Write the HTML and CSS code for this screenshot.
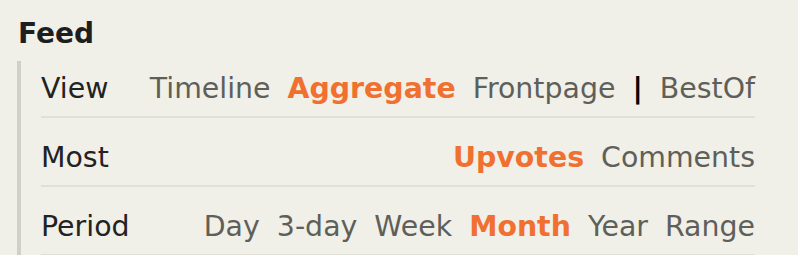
FILE: index.html
```html
<!DOCTYPE html>
<html>
<head>
<meta charset="utf-8">
<link rel="stylesheet" href="styles.css">
</head>
<body>
<section class="feed">
  <h2 class="feed-title">Feed</h2>
  <div class="feed-options">
    <div class="opt-row first">
      <span class="opt-label">View</span>
      <div class="opt-choices">
        <a class="choice">Timeline</a>
        <a class="choice active">Aggregate</a>
        <a class="choice">Frontpage</a>
        <span class="sep">|</span>
        <a class="choice">BestOf</a>
      </div>
    </div>
    <div class="opt-row">
      <span class="opt-label">Most</span>
      <div class="opt-choices">
        <a class="choice active">Upvotes</a>
        <a class="choice">Comments</a>
      </div>
    </div>
    <div class="opt-row">
      <span class="opt-label">Period</span>
      <div class="opt-choices">
        <a class="choice">Day</a>
        <a class="choice">3-day</a>
        <a class="choice">Week</a>
        <a class="choice active">Month</a>
        <a class="choice">Year</a>
        <a class="choice">Range</a>
      </div>
    </div>
  </div>
</section>
</body>
</html>
```
FILE: styles.css
```css
html, body {
  margin: 0;
  padding: 0;
  background: #f0efe8;
}
body {
  font-family: "DejaVu Sans", Verdana, sans-serif;
  font-size: 28.4px;
  line-height: 33px;
  color: #222;
}
.feed {
  padding: 17px 43px 0 18px;
}
.feed-title {
  margin: 0 0 11px 0;
  font-size: 28px;
  line-height: 33px;
  font-weight: bold;
  color: #1e1e1e;
}
.feed-options {
  margin-left: -1px;
  border-left: 4px solid #d0cfc8;
  padding-left: 20px;
}
.opt-row {
  display: flex;
  justify-content: space-between;
  align-items: baseline;
  padding: 23px 0 11px 0;
  border-bottom: 2px solid #e0dfd8;
}
.opt-row.first {
  padding-top: 11px;
}
.opt-label {
  color: #222;
}
.opt-choices {
  display: flex;
  align-items: baseline;
  gap: 17px;
}
.choice {
  color: #5f5f5a;
  text-decoration: none;
}
.choice.active {
  color: #f07030;
  font-weight: bold;
}
.sep {
  color: #000;
  font-weight: bold;
}
```
